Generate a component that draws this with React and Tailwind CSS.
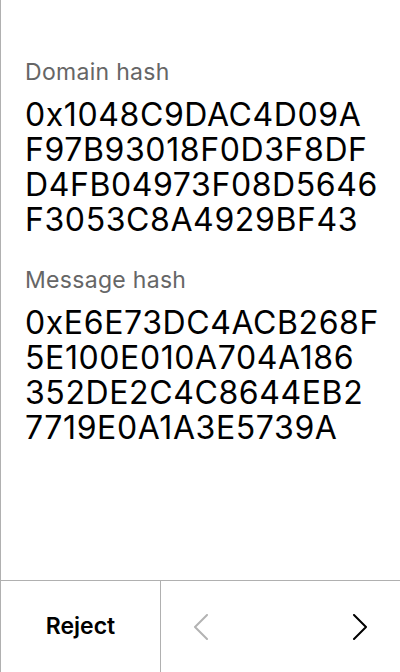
const FIELDS = [
  {
    label: 'Domain hash',
    value: ['0x1048C9DAC4D09A', 'F97B93018F0D3F8DF', 'D4FB04973F08D5646', 'F3053C8A4929BF43'],
  },
  {
    label: 'Message hash',
    value: ['0xE6E73DC4ACB268F', '5E100E010A704A186', '352DE2C4C8644EB2', '7719E0A1A3E5739A'],
  },
]

function Chevron({ dir, className }) {
  return (
    <svg width="16" height="26" viewBox="0 0 16 26" fill="none" className={className}>
      <polyline
        points={dir === 'left' ? '14,1 2,13 14,25' : '2,1 14,13 2,25'}
        stroke="currentColor"
        strokeWidth="2"
        strokeLinecap="round"
        strokeLinejoin="round"
      />
    </svg>
  )
}

export default function App() {
  return (
    <div
      className="h-[672px] w-[400px] flex flex-col bg-white border-l border-[#b0b0b0] text-black"
      style={{ fontFamily: 'Inter, "Noto Sans", sans-serif' }}
    >
      {/* Hash fields */}
      <div className="flex-1 pt-[58px] pl-[24px] flex flex-col gap-[29px]">
        {FIELDS.map((f) => (
          <div key={f.label} className="flex flex-col gap-[11px]">
            <div className="text-[23px] leading-[28px] tracking-[0.3px] text-[#666666]">{f.label}</div>
            <p className="text-[32px] leading-[35px] tracking-[0.6px] whitespace-nowrap">
              {f.value.map((line, i) => (
                <span key={line}>
                  {i > 0 && <br />}
                  {line}
                </span>
              ))}
            </p>
          </div>
        ))}
      </div>

      {/* Bottom bar */}
      <div className="h-[92px] border-t border-[#b0b0b0] flex">
        <button className="w-[160px] border-r border-[#b0b0b0] text-[23px] font-semibold">
          Reject
        </button>
        <div className="flex-1 flex justify-between">
          <button className="w-[80px] flex items-center justify-center text-[#b3b3b3]">
            <Chevron dir="left" />
          </button>
          <button className="w-[80px] flex items-center justify-center text-black">
            <Chevron dir="right" />
          </button>
        </div>
      </div>
    </div>
  )
}
